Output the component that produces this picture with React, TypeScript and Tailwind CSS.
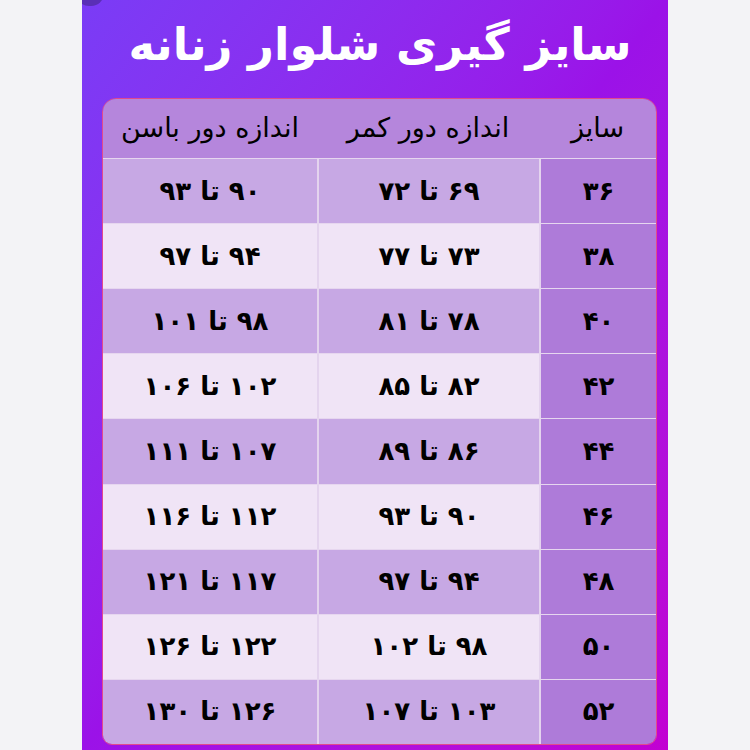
import React from "react";

const rows: [string, string, string][] = [
  ["۳۶", "۶۹ تا ۷۲", "۹۰ تا ۹۳"],
  ["۳۸", "۷۳ تا ۷۷", "۹۴ تا ۹۷"],
  ["۴۰", "۷۸ تا ۸۱", "۹۸ تا ۱۰۱"],
  ["۴۲", "۸۲ تا ۸۵", "۱۰۲ تا ۱۰۶"],
  ["۴۴", "۸۶ تا ۸۹", "۱۰۷ تا ۱۱۱"],
  ["۴۶", "۹۰ تا ۹۳", "۱۱۲ تا ۱۱۶"],
  ["۴۸", "۹۴ تا ۹۷", "۱۱۷ تا ۱۲۱"],
  ["۵۰", "۹۸ تا ۱۰۲", "۱۲۲ تا ۱۲۶"],
  ["۵۲", "۱۰۳ تا ۱۰۷", "۱۲۶ تا ۱۳۰"],
];

export default function App() {
  return (
    <div className="w-[750px] h-[750px] bg-[#f3f3f6] flex justify-center overflow-hidden" style={{ fontFamily: '"DejaVu Sans", sans-serif' }}>
      <div className="relative w-[586px] h-[750px] bg-gradient-to-br from-[#7a3cf6] via-[#9b12e8] to-[#c200d2] flex flex-col items-center overflow-hidden">
        <div className="absolute left-[-6px] top-[-20px] w-[28px] h-[26px] rounded-full bg-[#5a2fb6]"></div>
        <div dir="rtl" className="h-[98px] flex items-center justify-center pb-[10px] pl-[10px] text-white text-[45px] font-bold leading-none">
          سایز گیری شلوار زنانه
        </div>
        <div dir="rtl" className="w-[555px] h-[647px] ml-[9px] flex flex-col border border-[#e24a8c] rounded-tl-[14px] rounded-tr-[14px] rounded-bl-[10px] rounded-br-[10px] overflow-hidden text-black">
          <div className="h-[59px] shrink-0 grid grid-cols-[117px_222px_1fr] bg-[#b586dc] text-[27px]">
            <div className="flex items-center justify-center">سایز</div>
            <div className="flex items-center justify-center">اندازه دور کمر</div>
            <div className="flex items-center justify-center">اندازه دور باسن</div>
          </div>
          {rows.map((r, i) => {
            const dark = i % 2 === 0;
            return (
              <div key={i} className="flex-1 grid grid-cols-[117px_222px_1fr] border-t border-[#e6d6ef] text-[26px] font-bold">
                <div className="flex items-center justify-center bg-[#ae7bd9] border-l-2 border-[#e4d4ee]">{r[0]}</div>
                <div className={`flex items-center justify-center border-l-2 border-[#e4d4ee] ${dark ? "bg-[#c7a8e4]" : "bg-[#f0e4f6]"}`}>{r[1]}</div>
                <div className={`flex items-center justify-center ${dark ? "bg-[#c7a8e4]" : "bg-[#f0e4f6]"}`}>{r[2]}</div>
              </div>
            );
          })}
        </div>
      </div>
    </div>
  );
}
